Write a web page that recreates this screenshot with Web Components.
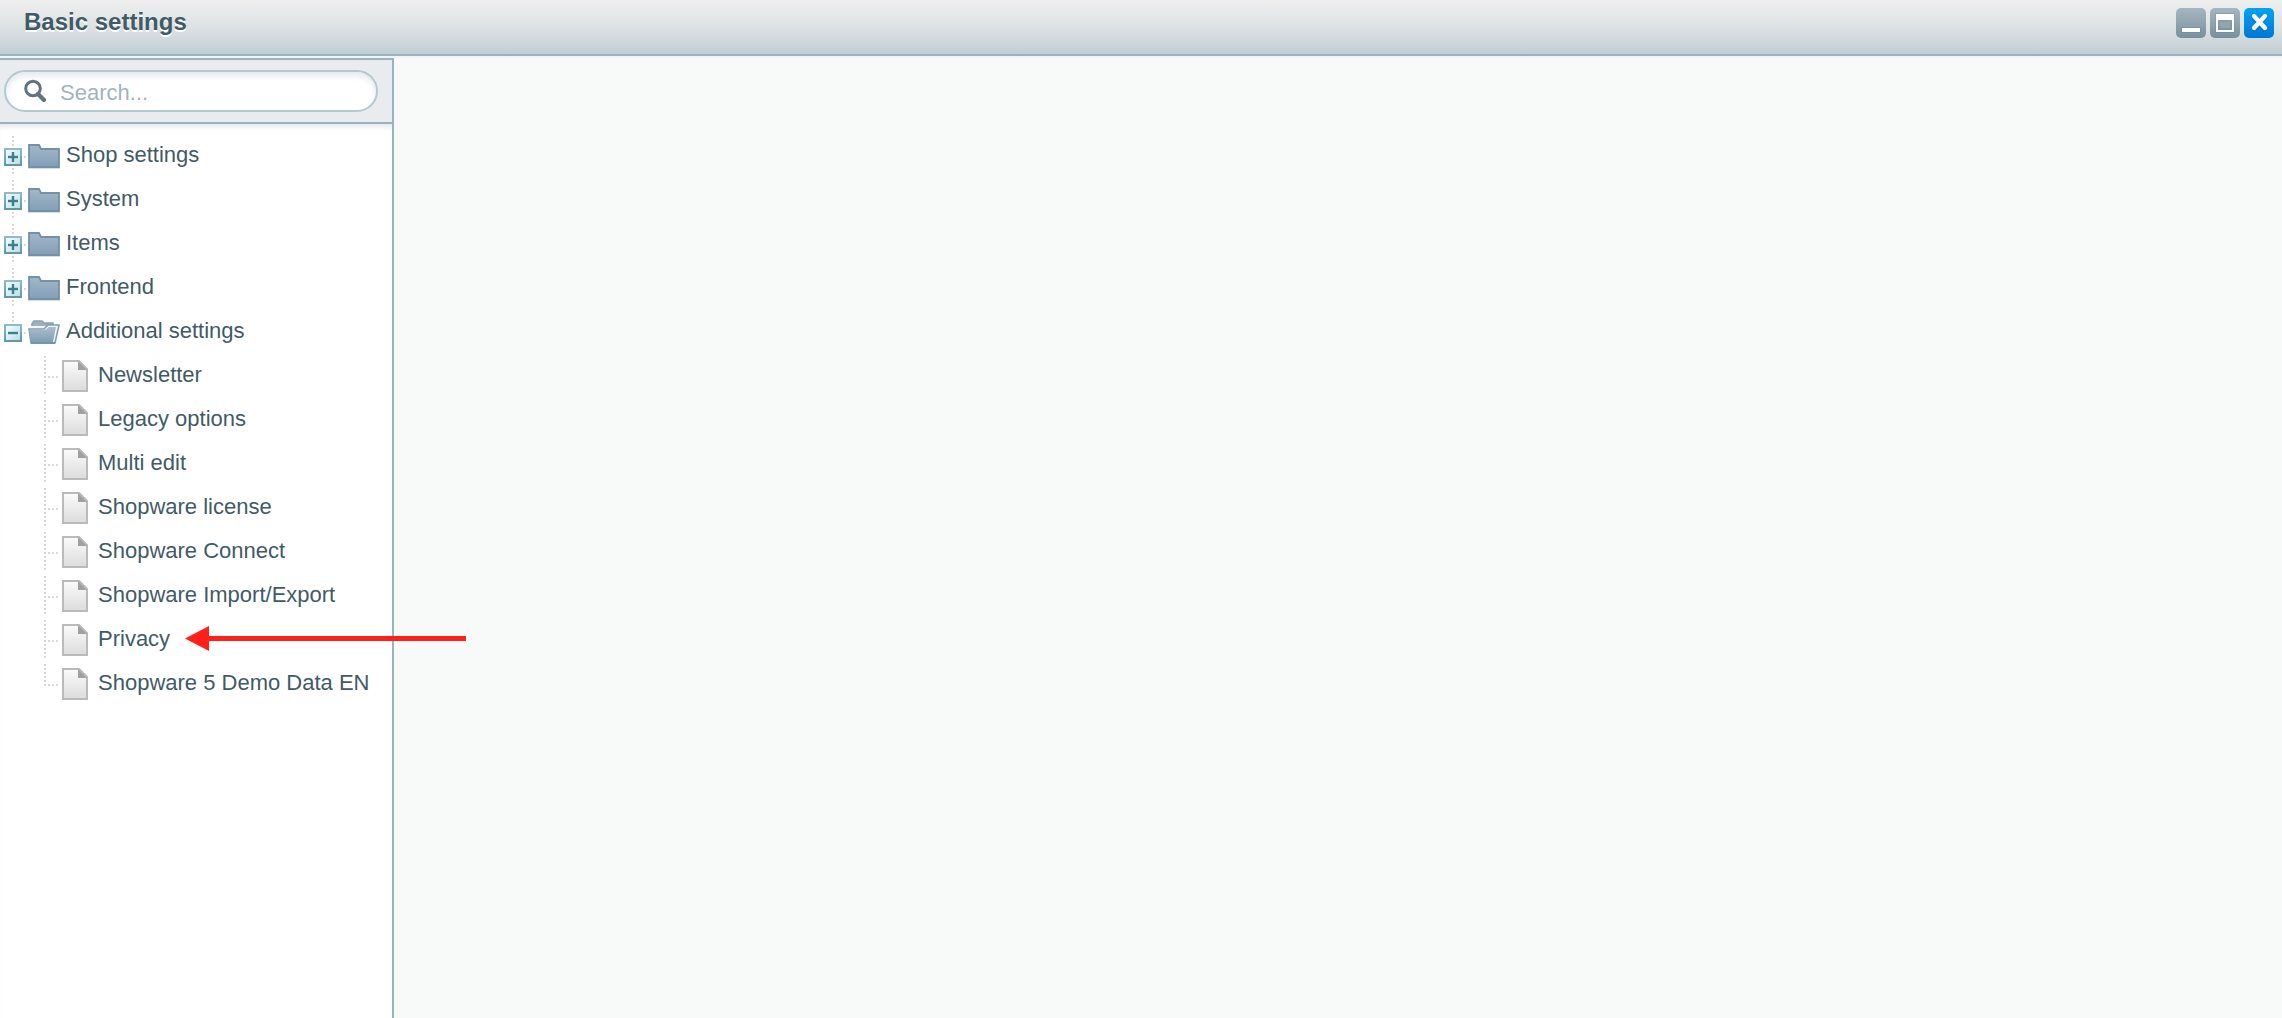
<!DOCTYPE html>
<html lang="en">
<head>
<meta charset="utf-8">
<title>Basic settings</title>
<style>
html, body { height: 100%; margin: 0; }
body { font: 22px/38px "Liberation Sans", Arial, sans-serif; color: #3f5b68; background: #f8faf9; overflow: hidden; }
</style>
</head>
<body>
<settings-window heading="Basic settings">
  <settings-sidebar slot="sidebar">
    <tree-folder label="Shop settings"></tree-folder>
    <tree-folder label="System"></tree-folder>
    <tree-folder label="Items"></tree-folder>
    <tree-folder label="Frontend"></tree-folder>
    <tree-folder label="Additional settings" open>
      <tree-leaf>Newsletter</tree-leaf>
      <tree-leaf>Legacy options</tree-leaf>
      <tree-leaf>Multi edit</tree-leaf>
      <tree-leaf>Shopware license</tree-leaf>
      <tree-leaf>Shopware Connect</tree-leaf>
      <tree-leaf>Shopware Import/Export</tree-leaf>
      <tree-leaf>Privacy<pointer-arrow slot="marker"></pointer-arrow></tree-leaf>
      <tree-leaf last>Shopware 5 Demo Data EN</tree-leaf>
    </tree-folder>
  </settings-sidebar>
</settings-window>
<script>
const define = (name, html, setup) => customElements.define(name, class extends HTMLElement {
  connectedCallback() {
    if (this.shadowRoot) return;
    this.attachShadow({ mode: 'open' }).innerHTML = html;
    if (setup) setup(this, this.shadowRoot);
  }
});

define('settings-window', `
<style>
:host { display: flex; flex-direction: column; height: 100%; }
header { display: flex; justify-content: space-between; align-items: flex-start; height: 54px; flex: none;
  background: linear-gradient(#efefef, #dde2e4 50%, #c1ced5); border-bottom: 2px solid #9bb3bf; }
h1 { margin: 0; padding-left: 24px; font-size: 24px; line-height: 44px; font-weight: bold; text-shadow: 0 2px 0 #fff; }
nav { display: flex; gap: 4px; padding: 8px 8px 0 0; }
button { width: 30px; height: 30px; padding: 0; border: 0; border-radius: 5px; background: linear-gradient(#a5b7c0, #78919d); }
button.close { background: linear-gradient(#00a4f4, #0076d6); }
svg { display: block; }
main { flex: 1; display: flex; min-height: 0; border-top: 2px solid #f0f4f6; }
section { flex: 1; }
</style>
<header>
  <h1></h1>
  <nav>
    <button aria-label="Minimize"><svg width="30" height="30"><path d="M5 19h20v6H5z" fill="#66808d" fill-opacity=".3"/><path d="M6 20h18v4H6z" fill="#fff"/></svg></button>
    <button aria-label="Maximize"><svg width="30" height="30"><path d="M5 5h20v20H5z" fill="#66808d" fill-opacity=".25"/><path d="M6 6h18v18H6zM8 12v10h14V12z" fill="#fff" fill-rule="evenodd"/><path d="M10 14h10v6H10z" fill="#9aadb7" fill-opacity=".6"/></svg></button>
    <button class="close" aria-label="Close"><svg width="30" height="30" fill="none" stroke-linecap="round"><path d="M10 9l10 12M20 9L10 21" stroke="#0062b4" stroke-opacity=".4" stroke-width="6"/><path d="M10 8l11 12M21 8L10 20" stroke="#fff" stroke-width="4.400"/></svg></button>
  </nav>
</header>
<main><slot name="sidebar"></slot><section></section></main>
`, (el, root) => { root.querySelector('h1').textContent = el.getAttribute('heading'); });

define('settings-sidebar', `
<style>
:host { display: flex; flex-direction: column; width: 392px; flex: none; background: #fff; border: solid #9bb3bf; border-width: 2px 2px 0 0; }
form { display: flex; padding: 10px 14px 10px 4px; margin: 0; background: #e8ecef; border-bottom: 2px solid #9bb3bf; }
label { flex: 1; display: flex; align-items: center; height: 38px; border: 2px solid #b3c8d0; border-radius: 21px;
  background: #fff; box-shadow: inset 0 4px 6px #e3ebed; }
svg { flex: none; margin: 0 12px 0 16px; }
input { flex: 1; min-width: 0; margin: 0; padding: 4px 0 0; border: 0; outline: 0; background: none; font: inherit; line-height: 26px; color: inherit; }
input::placeholder { color: #9fb5c0; opacity: 1; }
.tree { flex: 1; padding-top: 12px; box-shadow: inset 0 6px 6px -4px #dde3e6; }
</style>
<form>
  <label>
    <svg width="26" height="26" viewBox="0 0 26 26" fill="none" stroke="#60747f" aria-hidden="true"><circle cx="11" cy="10.500" r="7.300" stroke-width="3"/><path d="M16 16l6 6" stroke-width="4.200" stroke-linecap="round"/></svg>
    <input type="text" placeholder="Search..." aria-label="Search">
  </label>
</form>
<div class="tree" role="tree"><slot></slot></div>
`);

define('tree-folder', `
<style>
:host { display: block; }
.row { display: flex; height: 44px; }
button { display: block; padding: 0; border: 0; background: none; width: 28px; height: 40px; }
svg { display: block; flex: none; }
.icon { margin: 8px 6px 0 0; }
.label { white-space: nowrap; }
.kids { display: none; }
:host([open]) .kids { display: block; }
:host([open]) .closed, .opened { display: none; }
:host([open]) .opened { display: block; }
:host([open]) .plus { display: none; }
</style>
<div class="row" role="treeitem">
  <button aria-label="Toggle">
    <svg width="28" height="40">
      <defs><linearGradient id="g" x2="1" y2="1"><stop stop-color="#f7feff"/><stop offset="1" stop-color="#b9dde2"/></linearGradient>
      <linearGradient id="b" x2="0" y2="1"><stop stop-color="#8fbcc5"/><stop offset="1" stop-color="#5f98a4"/></linearGradient></defs>
      <path d="M13 0v12" stroke="#d8d8d8" stroke-width="2" stroke-dasharray="2 2"/>
      <path class="plus" d="M13 32v6" stroke="#d8d8d8" stroke-width="2" stroke-dasharray="2 2"/>
      <path d="M24 21h2" stroke="#d8d8d8" stroke-width="2"/>
      <rect x="5" y="13" width="16" height="16" fill="url(#g)" stroke="url(#b)" stroke-width="2"/>
      <path d="M8 21h10" stroke="#38808e" stroke-width="2.400"/>
      <path class="plus" d="M13 16v10" stroke="#38808e" stroke-width="2.400"/>
    </svg>
  </button>
  <svg class="icon closed" width="32" height="26">
    <defs><linearGradient id="f" x2="0" y2="1"><stop stop-color="#a3b7c7"/><stop offset="1" stop-color="#829fb8"/></linearGradient></defs>
    <path d="M0 24.500h32" stroke="#d5dfe6" stroke-width="1"/>
    <path d="M1 1h10l2 4h18v18H1z" fill="url(#f)" stroke="#7391a5" stroke-width="1.800"/>
  </svg>
  <svg class="icon opened" width="32" height="26">
    <defs><linearGradient id="o" x2="0" y2="1"><stop stop-color="#a9bdcb"/><stop offset="1" stop-color="#7f9fb6"/></linearGradient></defs>
    <path d="M4 9V4l2-3h8l2 2h9v5z" fill="#9db2c0" stroke="#86a1b1" stroke-width="1.600"/>
    <path d="M3 6h16l-3 4H2z" fill="#eef4f7"/>
    <path d="M1 9h15l4-4h11l-4 18H3z" fill="#f3f7f9" stroke="#809eaf" stroke-width="1.600"/>
    <path d="M1 10h16l4-3h7l-3 15H3z" fill="url(#o)"/>
    <path d="M3 23h24" stroke="#7191a6" stroke-width="1.800"/>
  </svg>
  <span class="label"></span>
</div>
<div class="kids" role="group"><slot></slot></div>
`, (el, root) => {
  root.querySelector('.label').textContent = el.getAttribute('label');
  root.querySelector('button').addEventListener('click', () => el.toggleAttribute('open'));
});

define('tree-leaf', `
<style>
:host { display: flex; height: 44px; white-space: nowrap; }
svg { display: block; flex: none; }
.lines { margin-left: 44px; }
.page { margin: 4px 10px 0 0; }
.label { position: relative; }
:host([last]) .below { display: none; }
</style>
<svg class="lines" width="18" height="40"><g stroke="#d8d8d8" stroke-width="2" stroke-dasharray="2 2"><path d="M1 0v22"/><path class="below" d="M1 24v14"/><path d="M4 21h11"/></g></svg>
<svg class="page" width="26" height="32">
  <defs><linearGradient id="p" x2="0" y2="1"><stop stop-color="#fbfbfb"/><stop offset="1" stop-color="#dcdcdc"/></linearGradient></defs>
  <path d="M1 1h16l8 8v22H1z" fill="url(#p)" stroke="#bababa" stroke-width="2"/>
  <path d="M16 1l9 9h-9z" fill="#a0a0a0"/>
</svg>
<span class="label"><slot></slot><slot name="marker"></slot></span>
`);

define('pointer-arrow', `
<style>
:host { position: absolute; left: 100%; top: 6px; margin-left: 15px; z-index: 1; pointer-events: none; }
svg { display: block; }
</style>
<svg width="281" height="26" fill="#ff201a" aria-hidden="true"><path d="M0 12.500L24 0v10h257v5H24v10z"/></svg>
`);
</script>
</body>
</html>
